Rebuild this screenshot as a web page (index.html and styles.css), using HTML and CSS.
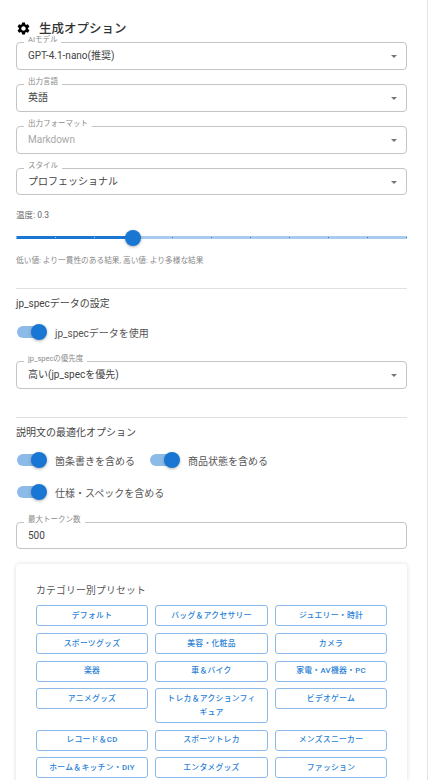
FILE: index.html
```html
<!DOCTYPE html>
<html>
<head>
<meta charset="utf-8">
<title>生成オプション</title>
<link rel="stylesheet" href="styles.css">
</head>
<body>
<div class="panel">
	<h2 class="title">
		<svg class="gear" viewBox="0 0 24 24"><path d="M19.14 12.94c.04-.3.06-.61.06-.94 0-.32-.02-.64-.07-.94l2.03-1.58c.18-.14.23-.41.12-.61l-1.92-3.32c-.12-.22-.37-.29-.59-.22l-2.39.96c-.5-.38-1.03-.7-1.62-.94l-.36-2.54c-.04-.24-.24-.41-.48-.41h-3.84c-.24 0-.43.17-.47.41l-.36 2.54c-.59.24-1.13.57-1.62.94l-2.39-.96c-.22-.08-.47 0-.59.22L2.74 8.87c-.12.21-.08.47.12.61l2.03 1.58c-.05.3-.09.63-.09.94s.02.64.07.94l-2.03 1.58c-.18.14-.23.41-.12.61l1.92 3.32c.12.22.37.29.59.22l2.39-.96c.5.38 1.03.7 1.62.94l.36 2.54c.05.24.24.41.48.41h3.84c.24 0 .44-.17.47-.41l.36-2.54c.59-.24 1.13-.56 1.62-.94l2.39.96c.22.08.47 0 .59-.22l1.92-3.32c.12-.22.07-.47-.12-.61l-2.01-1.58zM12 15.6c-1.98 0-3.6-1.62-3.6-3.6s1.62-3.6 3.6-3.6 3.6 1.62 3.6 3.6-1.62 3.6-3.6 3.6z"/></svg>
		生成オプション
	</h2>

	<div class="field"><span class="legend">AIモデル</span><span class="value">GPT-4.1-nano(推奨)</span><i class="arrow"></i></div>
	<div class="field"><span class="legend">出力言語</span><span class="value">英語</span><i class="arrow"></i></div>
	<div class="field"><span class="legend">出力フォーマット</span><span class="value muted">Markdown</span><i class="arrow"></i></div>
	<div class="field short"><span class="legend">スタイル</span><span class="value">プロフェッショナル</span><i class="arrow"></i></div>

	<div class="temp-label">温度: 0.3</div>
	<div class="slider">
		<div class="rail"></div>
		<div class="track"></div>
		<div class="ticks">
			<i class="on"></i><i class="on"></i><i class="on"></i><i class="on"></i><i></i><i></i><i></i><i></i><i></i><i></i><i></i>
		</div>
		<div class="thumb"></div>
	</div>
	<p class="hint">低い値: より一貫性のある結果, 高い値: より多様な結果</p>

	<hr class="divider first">
	<h3 class="sub">jp_specデータの設定</h3>
	<div class="switch-row one">
		<label class="switch"><span class="knob"></span>jp_specデータを使用</label>
	</div>
	<div class="field spec"><span class="legend">jp_specの優先度</span><span class="value">高い(jp_specを優先)</span><i class="arrow"></i></div>

	<hr class="divider second">
	<h3 class="sub">説明文の最適化オプション</h3>
	<div class="switch-row two">
		<label class="switch"><span class="knob"></span>箇条書きを含める</label>
		<label class="switch"><span class="knob"></span>商品状態を含める</label>
	</div>
	<div class="switch-row three">
		<label class="switch"><span class="knob"></span>仕様・スペックを含める</label>
	</div>
	<div class="field tokens"><span class="legend">最大トークン数</span><span class="value">500</span></div>

	<div class="card">
		<h4 class="card-title">カテゴリー別プリセット</h4>
		<div class="presets">
			<a class="btn" href="#">デフォルト</a>
			<a class="btn" href="#">バッグ＆アクセサリー</a>
			<a class="btn" href="#">ジュエリー・時計</a>
			<a class="btn" href="#">スポーツグッズ</a>
			<a class="btn" href="#">美容・化粧品</a>
			<a class="btn" href="#">カメラ</a>
			<a class="btn" href="#">楽器</a>
			<a class="btn" href="#">車＆バイク</a>
			<a class="btn" href="#">家電・AV機器・PC</a>
			<a class="btn" href="#">アニメグッズ</a>
			<a class="btn" href="#">トレカ＆アクションフィギュア</a>
			<a class="btn" href="#">ビデオゲーム</a>
			<a class="btn" href="#">レコード＆CD</a>
			<a class="btn" href="#">スポーツトレカ</a>
			<a class="btn" href="#">メンズスニーカー</a>
			<a class="btn" href="#">ホーム＆キッチン・DIY</a>
			<a class="btn" href="#">エンタメグッズ</a>
			<a class="btn" href="#">ファッション</a>
		</div>
	</div>
</div>
</body>
</html>
```

FILE: styles.css
```css
html,body{margin: 0;padding: 0;height: 780px;overflow: hidden;background-color: #fff;}
body{font-family: Roboto,"Noto Sans CJK JP",sans-serif;color: #444;}
h2,h3,h4,p{margin: 0;}

.panel{box-sizing: border-box;width: 428px;height: 780px;padding: 20px 20px 0 16px;border-right: 1px solid #e4e4e4;overflow: hidden;}

.title{display: flex;align-items: center;gap: 8px;height: 16px;font-size: 12.5px;line-height: 17px;font-weight: 500;margin-bottom: 6px;color: #333;}
.gear{width: 15px;height: 15px;}

.field{position: relative;box-sizing: border-box;height: 28px;margin-bottom: 14px;border: 1px solid #c4c4c4;border-radius: 4px;padding-left: 11px;display: flex;align-items: center;font-size: 10px;}
.field.short{height: 27px;}
.field.spec{margin-bottom: 0;}
.field.tokens{height: 27px;margin-bottom: 0;}
.legend{position: absolute;left: 7px;top: -8px;background-color: #fff;padding: 0 4px;font-size: 7.5px;line-height: 10px;color: #8a8a8a;white-space: nowrap;}
.value{line-height: 14px;}
.muted{color: #a8a8a8;}
.arrow{position: absolute;right: 9px;top: 12px;width: 0;height: 0;border-left: 3.5px solid transparent;border-right: 3.5px solid transparent;border-top: 3.5px solid #757575;}

.temp-label{font-size: 8.5px;line-height: 12px;color: #666;}
.slider{position: relative;height: 16px;margin-top: 9px;}
.rail{position: absolute;left: 0;right: 0;top: 6px;height: 3px;background-color: #a9cbee;}
.track{position: absolute;left: 0;width: 117px;top: 6px;height: 3px;border-radius: 2px 0 0 2px;background-color: #1976d2;}
.ticks{position: absolute;left: 0;right: 0;top: 7px;display: flex;justify-content: space-between;}
.ticks i{display: block;width: 1px;height: 1px;background-color: #1976d2;}
.ticks i.on{background-color: #b9d4ef;}
.thumb{position: absolute;left: 109px;top: 0;width: 16px;height: 16px;border-radius: 50%;background-color: #1976d2;box-shadow: 0 1px 3px rgba(0,0,0,.3);}

.hint{margin-top: 9px;font-size: 7.7px;line-height: 12px;color: #888;white-space: nowrap;}

.divider{border: 0;height: 1px;background-color: #e0e0e0;margin: 0;}
.divider.first{margin-top: 21px;}
.divider.second{margin-top: 28px;}
.sub{font-size: 10px;line-height: 14px;font-weight: 400;margin-top: 8px;color: #444;}

.switch-row{display: flex;gap: 14px;font-size: 10px;color: #555;}
.switch-row.one{margin-top: 13px;margin-bottom: 21px;}
.switch-row.two{margin-top: 12px;}
.switch-row.three{margin-top: 16px;margin-bottom: 22px;}
.switch{position: relative;display: flex;align-items: center;height: 16px;padding-left: 39px;white-space: nowrap;}
.switch:before{content: "";position: absolute;left: 1px;top: 2px;width: 24px;height: 12px;border-radius: 6px;background-color: #8cbbe9;}
.knob{position: absolute;left: 15px;top: 0;width: 16px;height: 16px;border-radius: 50%;background-color: #1976d2;box-shadow: 0 1px 3px rgba(0,0,0,.3);}

.card{box-sizing: border-box;margin-top: 15px;height: 260px;padding: 20px 20px 0;border-radius: 4px;background-color: #fff;box-shadow: 0 0 4px rgba(0,0,0,.14);}
.card-title{font-size: 9.8px;line-height: 14px;font-weight: 400;color: #555;margin-bottom: 7px;letter-spacing: .2px;}
.presets{display: grid;grid-template-columns: 112px 113px 112px;column-gap: 7px;row-gap: 6.8px;align-items: start;}
.btn{box-sizing: border-box;display: block;padding: 2.75px 8px;border: 1px solid #8cbbe9;border-radius: 3px;text-align: center;text-decoration: none;font-size: 7.8px;line-height: 13.5px;font-weight: 500;color: #2a7fd6;letter-spacing: .3px;}
```
